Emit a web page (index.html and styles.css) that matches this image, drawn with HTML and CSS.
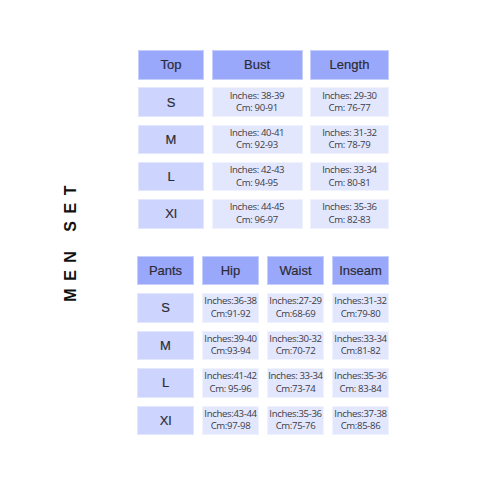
FILE: index.html
```html
<!DOCTYPE html>
<html>
<head>
<meta charset="utf-8">
<link rel="stylesheet" href="styles.css">
</head>
<body>
<div class="page">
  <div class="side"><div class="label">MEN SET</div></div>
  <div class="tables">
    <div class="grid top">
      <div class="cell head">Top</div>
      <div class="cell head">Bust</div>
      <div class="cell head">Length</div>

      <div class="cell size">S</div>
      <div class="cell data">Inches: 38-39<br>Cm: 90-91</div>
      <div class="cell data">Inches: 29-30<br>Cm: 76-77</div>

      <div class="cell size">M</div>
      <div class="cell data">Inches: 40-41<br>Cm: 92-93</div>
      <div class="cell data">Inches: 31-32<br>Cm: 78-79</div>

      <div class="cell size">L</div>
      <div class="cell data">Inches: 42-43<br>Cm: 94-95</div>
      <div class="cell data">Inches: 33-34<br>Cm: 80-81</div>

      <div class="cell size">Xl</div>
      <div class="cell data">Inches: 44-45<br>Cm: 96-97</div>
      <div class="cell data">Inches: 35-36<br>Cm: 82-83</div>
    </div>

    <div class="grid bottom">
      <div class="cell head">Pants</div>
      <div class="cell head">Hip</div>
      <div class="cell head">Waist</div>
      <div class="cell head">Inseam</div>

      <div class="cell size">S</div>
      <div class="cell data">Inches:36-38<br>Cm:91-92</div>
      <div class="cell data">Inches:27-29<br>Cm:68-69</div>
      <div class="cell data">Inches:31-32<br>Cm:79-80</div>

      <div class="cell size">M</div>
      <div class="cell data">Inches:39-40<br>Cm:93-94</div>
      <div class="cell data">Inches:30-32<br>Cm:70-72</div>
      <div class="cell data">Inches:33-34<br>Cm:81-82</div>

      <div class="cell size">L</div>
      <div class="cell data">Inches:41-42<br>Cm: 95-96</div>
      <div class="cell data">Inches: 33-34<br>Cm:73-74</div>
      <div class="cell data">Inches:35-36<br>Cm: 83-84</div>

      <div class="cell size">Xl</div>
      <div class="cell data">Inches:43-44<br>Cm:97-98</div>
      <div class="cell data">Inches:35-36<br>Cm:75-76</div>
      <div class="cell data">Inches:37-38<br>Cm:85-86</div>
    </div>
  </div>
</div>
</body>
</html>
```
FILE: styles.css
```css
html, body {
  margin: 0;
  padding: 0;
  background: #ffffff;
}

.page {
  width: 500px;
  height: 500px;
  display: flex;
  padding-top: 50px;
  box-sizing: border-box;
}

.side {
  width: 137px;
  height: 386px;
  padding-left: 5px;
  box-sizing: border-box;
  display: flex;
  align-items: center;
  justify-content: center;
}

.label {
  writing-mode: vertical-rl;
  transform: rotate(180deg);
  font-family: "Liberation Sans", Arial, sans-serif;
  font-weight: bold;
  font-size: 16px;
  letter-spacing: 7.5px;
  color: #111111;
  line-height: 1;
  padding-top: 7px;
}

.tables {
  display: flex;
  flex-direction: column;
  gap: 27px;
}

.grid {
  display: grid;
}

.grid.top {
  margin-left: 1px;
  grid-template-columns: 66px 91px 79px;
  grid-auto-rows: 29.5px;
  column-gap: 7.5px;
  row-gap: 7.75px;
}

.grid.bottom {
  grid-template-columns: 57px 57px 57px 57px;
  grid-auto-rows: 29.5px;
  column-gap: 8px;
  row-gap: 8px;
}

.cell {
  display: flex;
  align-items: center;
  justify-content: center;
  text-align: center;
  box-sizing: border-box;
  border: 1px solid rgba(255, 255, 255, 0.45);
}

.head {
  background: #9aa8fb;
  font-family: "Liberation Sans", Arial, sans-serif;
  font-size: 13px;
  color: #2b2b33;
  -webkit-text-stroke: 0.18px #2b2b33;
}

.size {
  background: #cdd4fd;
  font-family: "Liberation Sans", Arial, sans-serif;
  font-size: 13px;
  color: #2b2b33;
  -webkit-text-stroke: 0.18px #2b2b33;
}

.data {
  background: #e3e7fe;
  font-family: "Open Sans", sans-serif;
  font-size: 9.6px;
  letter-spacing: -0.35px;
  line-height: 12.3px;
  color: #3c3c44;
}
```
